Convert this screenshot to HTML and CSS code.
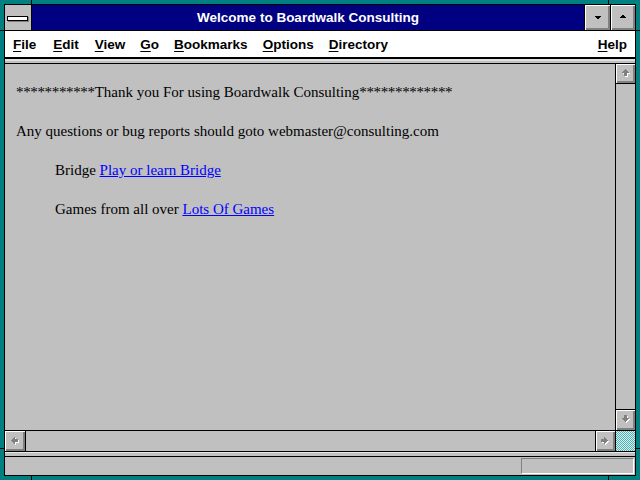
FILE: index.html
```html
<!DOCTYPE html>
<html>
<head>
<meta charset="utf-8">
<title>Welcome to Boardwalk Consulting</title>
<link rel="stylesheet" href="styles.css">
</head>
<body>
<div class="screen">
  <div class="window">
    <div class="titlebar">
      <div class="sysmenu"><span class="sysbar"></span></div>
      <div class="title">Welcome to Boardwalk Consulting</div>
      <div class="tbtn tmin">
        <svg width="25" height="25" viewBox="0 0 25 25" shape-rendering="crispEdges"><polygon points="9,11 16,11 12.5,14.5" fill="#000"/></svg>
      </div>
      <div class="tbtn tmax">
        <svg width="24" height="25" viewBox="0 0 24 25" shape-rendering="crispEdges"><polygon points="8,13 15,13 11.5,9.5" fill="#000"/></svg>
      </div>
    </div>
    <div class="menubar">
      <span class="mi mfile"><u>F</u>ile</span>
      <span class="mi medit"><u>E</u>dit</span>
      <span class="mi"><u>V</u>iew</span>
      <span class="mi"><u>G</u>o</span>
      <span class="mi"><u>B</u>ookmarks</span>
      <span class="mi"><u>O</u>ptions</span>
      <span class="mi"><u>D</u>irectory</span>
      <span class="mi help"><u>H</u>elp</span>
    </div>
    <div class="strip"></div>
    <div class="main">
      <div class="content">
        <p class="line"><span class="stars">***********</span>Thank you For using Boardwalk Consulting<span class="stars">*************</span></p>
        <p class="line">Any questions or bug reports should goto webmaster@consulting.com</p>
        <p class="line indent">Bridge <a href="#">Play or learn Bridge</a></p>
        <p class="line indent">Games from all over <a href="#">Lots Of Games</a></p>
      </div>
      <div class="vscroll">
        <div class="sbtn sup">
          <svg width="19" height="19" viewBox="0 0 19 19" shape-rendering="crispEdges">
            <g fill="#fff" transform="translate(1,1)"><rect x="9" y="5" width="1" height="1"/><rect x="8" y="6" width="3" height="1"/><rect x="7" y="7" width="5" height="1"/><rect x="6" y="8" width="7" height="1"/><rect x="8" y="9" width="3" height="3"/></g>
            <g fill="#808080"><rect x="9" y="5" width="1" height="1"/><rect x="8" y="6" width="3" height="1"/><rect x="7" y="7" width="5" height="1"/><rect x="6" y="8" width="7" height="1"/><rect x="8" y="9" width="3" height="3"/></g>
          </svg>
        </div>
        <div class="vtrack"></div>
        <div class="sbtn sdown">
          <svg width="19" height="19" viewBox="0 0 19 19" shape-rendering="crispEdges">
            <g fill="#fff" transform="translate(1,1)"><rect x="8" y="5" width="3" height="3"/><rect x="6" y="8" width="7" height="1"/><rect x="7" y="9" width="5" height="1"/><rect x="8" y="10" width="3" height="1"/><rect x="9" y="11" width="1" height="1"/></g>
            <g fill="#808080"><rect x="8" y="5" width="3" height="3"/><rect x="6" y="8" width="7" height="1"/><rect x="7" y="9" width="5" height="1"/><rect x="8" y="10" width="3" height="1"/><rect x="9" y="11" width="1" height="1"/></g>
          </svg>
        </div>
      </div>
    </div>
    <div class="hrow">
      <div class="hscroll">
        <div class="hbtn sleft">
          <svg width="20" height="20" viewBox="0 0 20 20" shape-rendering="crispEdges">
            <g fill="#fff" transform="translate(1,1)"><rect x="6" y="9" width="1" height="1"/><rect x="7" y="8" width="1" height="3"/><rect x="8" y="7" width="1" height="5"/><rect x="9" y="6" width="1" height="7"/><rect x="10" y="8" width="3" height="3"/></g>
            <g fill="#808080"><rect x="6" y="9" width="1" height="1"/><rect x="7" y="8" width="1" height="3"/><rect x="8" y="7" width="1" height="5"/><rect x="9" y="6" width="1" height="7"/><rect x="10" y="8" width="3" height="3"/></g>
          </svg>
        </div>
        <div class="htrack"></div>
        <div class="hbtn sright">
          <svg width="19" height="20" viewBox="0 0 19 20" shape-rendering="crispEdges">
            <g fill="#fff" transform="translate(1,1)"><rect x="5" y="8" width="3" height="3"/><rect x="8" y="6" width="1" height="7"/><rect x="9" y="7" width="1" height="5"/><rect x="10" y="8" width="1" height="3"/><rect x="11" y="9" width="1" height="1"/></g>
            <g fill="#808080"><rect x="5" y="8" width="3" height="3"/><rect x="8" y="6" width="1" height="7"/><rect x="9" y="7" width="1" height="5"/><rect x="10" y="8" width="1" height="3"/><rect x="11" y="9" width="1" height="1"/></g>
          </svg>
        </div>
      </div>
      <div class="corner"></div>
    </div>
    <div class="sep"></div>
    <div class="status"><div class="statbox"></div></div>
  </div>
  <span class="notch nt1"></span>
  <span class="notch nt2"></span>
  <span class="notch nb1"></span>
  <span class="notch nb2"></span>
  <span class="notch nl1"></span>
  <span class="notch nl2"></span>
  <span class="notch nr1"></span>
  <span class="notch nr2"></span>
</div>
</body>
</html>
```

FILE: styles.css
```css
* { box-sizing: border-box; }
html, body { margin: 0; padding: 0; }
body { background: #008080; }

.screen {
  position: relative;
  width: 640px;
  height: 480px;
  padding: 4px;
  background: #008080;
  overflow: hidden;
}

.window {
  width: 632px;
  height: 472px;
  border: 1px solid #000;
  background: #c0c0c0;
  display: flex;
  flex-direction: column;
}

/* title bar */
.titlebar {
  height: 26px;
  flex: 0 0 26px;
  display: flex;
  border-bottom: 1px solid #000;
}
.sysmenu {
  width: 27px;
  border-right: 1px solid #000;
  background: #c0c0c0;
  display: flex;
  align-items: center;
  justify-content: center;
  padding-bottom: 1px;
}
.sysbar {
  display: block;
  width: 21px;
  height: 5px;
  margin-top: 3px;
  margin-left: -1px;
  background: #fff;
  border: 1px solid #000;
  box-shadow: 1px 1px 0 #808080;
}
.title {
  flex: 1;
  background: #000080;
  color: #fff;
  font-family: "Liberation Sans", Arial, sans-serif;
  font-weight: bold;
  font-size: 13.5px;
  line-height: 25px;
  text-align: center;
}
.tbtn {
  border-left: 1px solid #000;
  background: #c0c0c0;
  box-shadow: inset 1px 1px 0 #fff, inset -2px -2px 0 #808080;
}
.tbtn svg { display: block; }
.tmin { width: 26px; }
.tmax { width: 25px; }

/* menu bar */
.menubar {
  flex: 0 0 28px;
  height: 28px;
  background: #fff;
  border-bottom: 2px solid #000;
  display: flex;
  align-items: center;
  gap: 15px;
  padding: 1px 8px 0 8px;
  font-family: "Liberation Sans", Arial, sans-serif;
  font-weight: bold;
  font-size: 13.5px;
  color: #000;
}
.mi u { text-decoration: underline; text-decoration-thickness: 1px; text-underline-offset: 2px; }
.mfile { margin-right: 2px; }
.medit { margin-right: 1px; }
.help { margin-left: auto; }

.strip {
  flex: 0 0 5px;
  height: 5px;
  background: #c0c0c0;
  border-top: 2px solid #e0e0e0;
  border-bottom: 1px solid #000;
}

/* main */
.main {
  flex: 0 0 366px;
  height: 366px;
  display: flex;
}
.content {
  flex: 1;
  padding: 19px 0 0 11px;
  font-family: "Liberation Serif", "Times New Roman", serif;
  font-size: 15px;
  color: #000;
}
.line {
  margin: 0 0 21px 0;
  line-height: 18px;
  white-space: nowrap;
}
.stars { letter-spacing: -0.35px; }
.indent { margin-left: 39px; }
.content a { color: #0000ff; text-decoration: underline; }

.vscroll {
  width: 20px;
  flex: 0 0 20px;
  border-left: 1px solid #000;
  display: flex;
  flex-direction: column;
}
.sbtn {
  height: 20px;
  background: #c0c0c0;
  box-shadow: inset 1px 1px 0 #fff, inset -2px -2px 0 #808080;
}
.sbtn svg, .hbtn svg { display: block; }
.sup { border-bottom: 1px solid #000; }
.sdown { border-top: 1px solid #000; height: 21px; }
.vtrack { flex: 1; background: #c0c0c0; }

/* horizontal scroll row */
.hrow {
  flex: 0 0 21px;
  height: 21px;
  border-top: 1px solid #000;
  display: flex;
}
.hscroll { flex: 1; display: flex; }
.hbtn {
  background: #c0c0c0;
  box-shadow: inset 1px 1px 0 #fff, inset -2px -2px 0 #808080;
}
.sleft { width: 21px; border-right: 1px solid #000; }
.sright { width: 20px; border-left: 1px solid #000; }
.htrack { flex: 1; background: #c0c0c0; }
.corner {
  width: 20px;
  border-left: 1px solid #000;
  background-color: #e8e8e8;
  background-image: repeating-conic-gradient(#40b8b8 0 25%, #e8e8e8 0 50%);
  background-size: 2px 2px;
}

.sep {
  flex: 0 0 6px;
  height: 6px;
  border-top: 1px solid #000;
  border-bottom: 1px solid #000;
  background: #c0c0c0;
  box-shadow: inset 0 1px 0 #e8e8e8;
}

.status {
  flex: 1;
  background: #c0c0c0;
  display: flex;
  justify-content: flex-end;
  padding: 1px 1px 1px 0;
}
.statbox {
  width: 113px;
  border-top: 1px solid #808080;
  border-left: 1px solid #808080;
  border-bottom: 1px solid #fff;
  border-right: 1px solid #fff;
}

/* resize border notches */
.notch { position: absolute; background: #000; }
.nt1 { left: 31px; top: 0; width: 1px; height: 4px; }
.nt2 { left: 608px; top: 0; width: 1px; height: 4px; }
.nb1 { left: 31px; top: 476px; width: 1px; height: 4px; }
.nb2 { left: 608px; top: 476px; width: 1px; height: 4px; }
.nl1 { left: 0; top: 30px; width: 4px; height: 1px; }
.nl2 { left: 0; top: 448px; width: 4px; height: 1px; }
.nr1 { left: 636px; top: 30px; width: 4px; height: 1px; }
.nr2 { left: 636px; top: 448px; width: 4px; height: 1px; }
```
